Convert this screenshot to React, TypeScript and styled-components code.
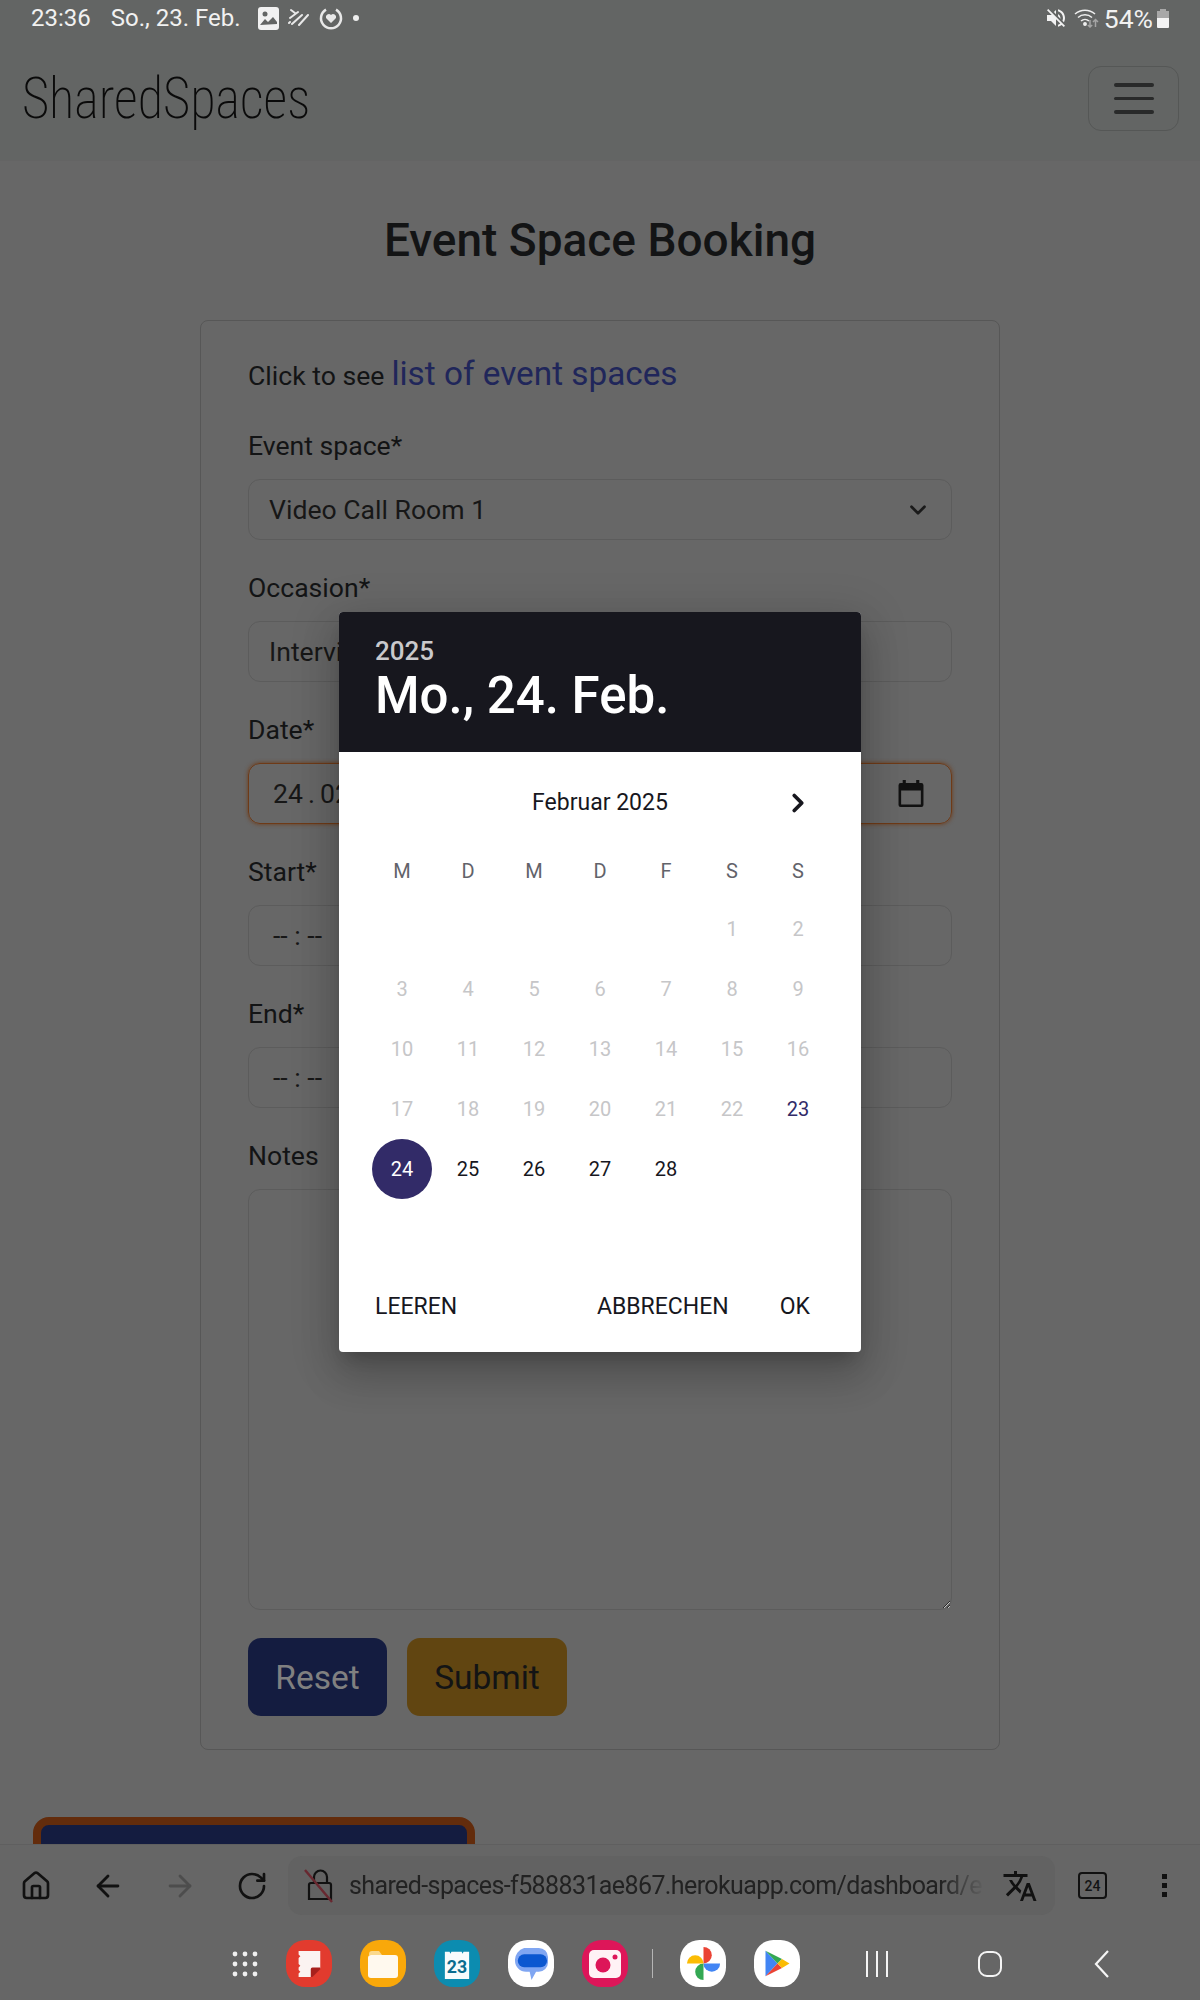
import styled, { createGlobalStyle } from "styled-components";
import { ArrowLeft, ArrowRight, ChevronDown, ChevronRight, House, RotateCw } from "lucide-react";
import { MdTranslate, MdVolumeOff } from "react-icons/md";

const GlobalStyle = createGlobalStyle`
  html, body {
    margin: 0;
    padding: 0;
    background: #676767;
  }
  * {
    box-sizing: border-box;
  }
`;

const Screen = styled.div`
  position: relative;
  width: 1200px;
  height: 2000px;
  overflow: hidden;
  display: flex;
  flex-direction: column;
  font-family: Roboto, "Liberation Sans", sans-serif;
  background: #676767;
  color: #131415;
`;

const StatusBar = styled.div`
  height: 36px;
  flex: none;
  display: flex;
  align-items: center;
  padding: 0 31px;
  background: #636564;
  color: #f1f1f1;
  font-size: 24px;
`;

const StatusDate = styled.span`
  margin-left: 20px;
  margin-right: 17px;
`;

const StatusIcons = styled.div`
  display: flex;
  align-items: center;
  gap: 9px;
`;

const StatusRight = styled.div`
  margin-left: auto;
  display: flex;
  align-items: center;
`;

const Battery = styled.span`
  font-size: 26.5px;
  margin: 0 4px 0 4px;
`;

const Navbar = styled.nav`
  height: 125px;
  flex: none;
  display: flex;
  align-items: center;
  justify-content: space-between;
  padding: 1px 21px 0 22px;
  background: #636564;
  border-bottom: 1px solid #646464;
`;

const Brand = styled.div`
  font-size: 58px;
  font-weight: 200;
  color: #0a0a0a;
  transform: scaleX(0.9);
  transform-origin: left center;
  font-stretch: 75%;
  line-height: 1;
  margin-top: -2px;
`;

const Toggler = styled.div`
  width: 91px;
  height: 65px;
  border: 1px solid #555756;
  border-radius: 13px;
  display: flex;
  flex-direction: column;
  justify-content: center;
  align-items: center;
  gap: 10px;
`;

const TogglerBar = styled.span`
  width: 40px;
  height: 3.5px;
  border-radius: 2px;
  background: #292a2a;
`;

const Content = styled.main`
  flex: 1;
  min-height: 0;
  overflow: hidden;
  display: flex;
  flex-direction: column;
`;

const Heading = styled.h1`
  margin: 52px 0 53px;
  text-align: center;
  font-size: 46px;
  font-weight: 500;
  line-height: 54px;
`;

const Card = styled.section`
  width: 800px;
  height: 1430px;
  flex: none;
  margin: 0 auto;
  padding: 33px 47px;
  border: 1px solid #575757;
  border-radius: 8px;
`;

const ListRow = styled.p`
  margin: 0 0 29px;
  height: 44px;
  font-size: 26.6px;
  display: flex;
  align-items: baseline;
  gap: 7px;
`;

const ListLink = styled.a`
  font-size: 33.3px;
  color: #20265a;
`;

const Label = styled.div`
  font-size: 26.6px;
  line-height: 38px;
  margin-bottom: 14px;
`;

const inputBox = `
  width: 100%;
  height: 61px;
  border-radius: 12px;
  border: 1px solid #5c5c5c;
  background: transparent;
  font-family: Roboto, "Liberation Sans", sans-serif;
  font-size: 26.6px;
  color: #171717;
  display: flex;
  align-items: center;
  justify-content: space-between;
  outline: none;
  margin-bottom: 29px;
`;

const Select = styled.div`
  ${inputBox}
  padding: 0 20px;
`;

const TextInput = styled.input`
  ${inputBox}
  padding: 0 20px;
`;

const TimeInput = styled.div<{ $focused?: boolean }>`
  ${inputBox}
  padding: 0 24px;
  ${(p) => p.$focused && "border-color: #6e3a17; box-shadow: 0 0 4px #6e3a17; word-spacing: -1.5px;"}
`;

const Notes = styled.textarea`
  display: block;
  width: 100%;
  height: 421px;
  border-radius: 12px;
  border: 1px solid #5c5c5c;
  background: transparent;
  resize: vertical;
  outline: none;
`;

const Buttons = styled.div`
  display: flex;
  gap: 20px;
  margin-top: 28px;
`;

const ActionButton = styled.div<{ $bg: string; $fg: string; $w: number }>`
  width: ${(p) => p.$w}px;
  height: 78px;
  border-radius: 13px;
  background: ${(p) => p.$bg};
  color: ${(p) => p.$fg};
  font-size: 33.5px;
  display: flex;
  align-items: center;
  justify-content: center;
`;

const ChatButton = styled.div`
  width: 442px;
  height: 120px;
  flex: none;
  margin: 67px 0 0 33px;
  border: 8px solid #632c0c;
  border-radius: 16px;
  background: #141c40;
`;

const BrowserBar = styled.div`
  height: 83px;
  flex: none;
  display: flex;
  align-items: flex-start;
  padding-top: 11px;
  border-top: 1px solid #5f5f5f;
  background: #666;
`;

const NavSlot = styled.div<{ $dim?: boolean }>`
  width: 72px;
  height: 59px;
  display: flex;
  align-items: center;
  justify-content: center;
  color: ${(p) => (p.$dim ? "#4d4d4d" : "#111")};
`;

const UrlPill = styled.div`
  width: 767px;
  height: 59px;
  border-radius: 14px;
  background: #626262;
  display: flex;
  align-items: center;
  padding: 0 17px 0 16px;
`;

const UrlText = styled.div`
  flex: 1;
  margin: 0 17px 0 15px;
  font-size: 25px;
  letter-spacing: -0.6px;
  color: #222;
  white-space: nowrap;
  overflow: hidden;
  -webkit-mask-image: linear-gradient(to right, #000 93%, transparent 100%);
  mask-image: linear-gradient(to right, #000 93%, transparent 100%);
`;

const TabCount = styled.div`
  width: 29px;
  height: 27px;
  margin: 16px 0 0 23px;
  border: 2px solid #111;
  border-radius: 4px;
  font-size: 14px;
  font-weight: 500;
  display: flex;
  align-items: center;
  justify-content: center;
`;

const MenuDots = styled.div`
  margin: 18px 0 0 55px;
  display: flex;
  flex-direction: column;
  gap: 4px;
`;

const MenuDot = styled.span`
  width: 5px;
  height: 5px;
  background: #111;
`;

const Dock = styled.div`
  height: 73px;
  flex: none;
  background: #666;
  display: flex;
  align-items: center;
  padding: 0 0 0 232px;
`;

const AppGroup = styled.div<{ $first?: boolean }>`
  display: flex;
  align-items: center;
  gap: 28px;
  margin-left: ${(p) => (p.$first ? "28px" : "0")};
`;

const AppIcon = styled.div<{ $bg: string }>`
  width: 46px;
  height: 47px;
  border-radius: 42%;
  background: ${(p) => p.$bg};
  display: flex;
  align-items: center;
  justify-content: center;
  overflow: hidden;
`;

const DockDivider = styled.span`
  width: 1px;
  height: 29px;
  margin: 0 27px 0 24px;
  background: #b5b5b5;
`;

const SoftKeys = styled.div`
  margin-left: 65px;
  display: flex;
  align-items: center;
  gap: 89px;
  color: #f5f5f5;
`;

const Dialog = styled.div`
  position: absolute;
  left: 339px;
  top: 612px;
  width: 522px;
  height: 740px;
  background: #fff;
  border-radius: 4px;
  overflow: hidden;
  box-shadow: 0 11px 15px -7px rgba(0, 0, 0, 0.2), 0 24px 38px 3px rgba(0, 0, 0, 0.14), 0 9px 46px 8px rgba(0, 0, 0, 0.12);
  display: flex;
  flex-direction: column;
`;

const DialogHead = styled.header`
  height: 140px;
  flex: none;
  background: #17171e;
  padding: 24px 36px 0;
  color: #fff;
`;

const DialogYear = styled.div`
  font-size: 26px;
  font-weight: 500;
  line-height: 30px;
  color: #c9c9cc;
`;

const DialogDate = styled.div`
  margin-top: 2px;
  font-size: 51px;
  font-weight: 500;
  line-height: 56px;
`;

const MonthRow = styled.div`
  height: 60px;
  margin: 20px 30px 0;
  display: flex;
  align-items: center;
  justify-content: center;
  position: relative;
  color: #17171e;
  font-size: 23px;
  font-weight: 450;
`;

const NextMonth = styled.span`
  position: absolute;
  right: 18px;
  top: 16px;
  display: flex;
`;

const WeekRow = styled.div`
  display: grid;
  grid-template-columns: repeat(7, 66px);
  margin: 11px 30px 0;
  height: 56px;
  align-items: center;
`;

const WeekDay = styled.span`
  text-align: center;
  font-size: 20px;
  color: #62636a;
`;

const DayGrid = styled.div`
  display: grid;
  grid-template-columns: repeat(7, 66px);
  grid-auto-rows: 60px;
  margin: 0 30px;
  height: 300px;
`;

const Day = styled.span<{ $kind: "off" | "on" | "today" | "selected" }>`
  width: 60px;
  height: 60px;
  justify-self: center;
  border-radius: 50%;
  display: flex;
  align-items: center;
  justify-content: center;
  font-size: 20px;
  color: ${(p) =>
    p.$kind === "off" ? "#c6c6c8" : p.$kind === "today" ? "#322b68" : p.$kind === "selected" ? "#fff" : "#17171e"};
  background: ${(p) => (p.$kind === "selected" ? "#322b68" : "transparent")};
`;

const DialogActions = styled.footer`
  margin-top: auto;
  height: 94px;
  padding: 2px 51px 0 36px;
  display: flex;
  align-items: center;
  font-size: 23px;
  font-weight: 450;
  color: #17171e;
`;

const ActionText = styled.span<{ $push?: boolean }>`
  margin-left: ${(p) => (p.$push ? "auto" : "0")};
  margin-right: ${(p) => (p.$push ? "51px" : "0")};
`;

function CalendarGlyph() {
  return (
    <svg width="26" height="27" viewBox="2 1 24 26" style={{ marginRight: 3 }}>
      <path d="M6 1h3v3h10V1h3v3h2a2 2 0 0 1 2 2v19a2 2 0 0 1-2 2H4a2 2 0 0 1-2-2V6a2 2 0 0 1 2-2h2zM4.500 11v13.500h19V11z" fill="#111" fillRule="evenodd" />
    </svg>
  );
}

function PictureGlyph() {
  return (
    <svg width="21" height="23" viewBox="0 0 21 23">
      <rect width="21" height="23" rx="3" fill="#f1f1f1" />
      <circle cx="7" cy="7" r="2.500" fill="#636564" />
      <path d="M2 18l5-6 3 3 5-5 4 5v2z" fill="#636564" />
    </svg>
  );
}

function StripesGlyph() {
  return (
    <svg width="22" height="20" viewBox="0 0 22 20" stroke="#e8e8e8" strokeWidth="2" strokeLinecap="round">
      <path d="M3 2l4 3M2 10l8-6M4 16l10-9M11 17l9-10M1 15l1-1" />
    </svg>
  );
}

function HeartRing() {
  return (
    <svg width="24" height="24" viewBox="0 0 24 24">
      <path d="M7 3.600a10 10 0 1 0 10 0" fill="none" stroke="#e8e8e8" strokeWidth="2.500" />
      <path d="M12 17l-5-5a3 3 0 0 1 5-3 3 3 0 0 1 5 3z" fill="#e8e8e8" />
    </svg>
  );
}

function WifiGlyph() {
  return (
    <svg width="26" height="20" viewBox="0 0 26 20" fill="none" stroke="#efefef" strokeWidth="1.500" style={{ marginLeft: 6 }}>
      <path d="M1 6a15 15 0 0 1 20 0M4 9.500a10.500 10.500 0 0 1 14 0M7 13a6 6 0 0 1 8 0" />
      <circle cx="11" cy="16" r="1.200" fill="#efefef" />
      <path d="M16 12v7M21.500 19v-7M19 14l2.500-2.500L24 14M13.800 17l2.200 2 2.200-2" stroke="#a5a5a5" />
    </svg>
  );
}

function BatteryGlyph() {
  return (
    <svg width="12" height="19" viewBox="0 0 12 19">
      <path d="M3 0h6v2h3v9H0V2h3z" fill="#a8a8a8" />
      <path d="M0 9h12v9a1 1 0 0 1-1 1H1a1 1 0 0 1-1-1z" fill="#f4f4f4" />
    </svg>
  );
}

function LockOff() {
  return (
    <svg width="30" height="34" viewBox="0 0 30 34" fill="none">
      <path d="M7 14h18a2 2 0 0 1 2 2v14H5V16a2 2 0 0 1 2-2zM10 14V8a6.500 6.500 0 0 1 13 0v6" stroke="#111" strokeWidth="2.200" />
      <path d="M1 1l27 32" stroke="#682830" strokeWidth="2.500" />
    </svg>
  );
}

function AppDots() {
  const dots = [0, 1, 2].flatMap((y) => [0, 1, 2].map((x) => [x, y]));
  return (
    <svg width="26" height="26" viewBox="0 0 26 26">
      {dots.map(([x, y]) => (
        <circle key={`${x}-${y}`} cx={3 + x * 10} cy={3 + y * 10} r="2.400" fill="#f0f0f0" />
      ))}
    </svg>
  );
}

function NotesApp() {
  return (
    <svg width="26" height="28" viewBox="0 0 30 32">
      <path d="M3 1h25v20l-10 10H3v-4l2-2-2-2v-3l2-2-2-2V9l2-2-2-2z" fill="#fbf3f1" />
      <path d="M28 20v2l-9 9h-2v-9a2 2 0 0 1 2-2z" fill="#a8201c" />
    </svg>
  );
}

function FilesApp() {
  return (
    <svg width="30" height="28" viewBox="0 0 30 28">
      <path d="M1 4a3 3 0 0 1 3-3h7l3 4H1z" fill="#fbd98c" />
      <rect x="0" y="5" width="30" height="23" rx="3" fill="#fff9ee" />
    </svg>
  );
}

function CalendarApp() {
  return (
    <svg width="28" height="30" viewBox="0 0 30 32">
      <path d="M2 3h5l1 2 1-2h11l1 2 1-2h6v29H2z" fill="#f7fbfc" />
      <text x="15" y="26" textAnchor="middle" fontSize="19" fontWeight="700" fontFamily="Roboto, sans-serif" fill="#0b6c8f">23</text>
    </svg>
  );
}

function MessagesApp() {
  return (
    <svg width="33" height="35" viewBox="0 0 36 38">
      <path d="M10 2h16a10 10 0 0 1 10 10v6a10 10 0 0 1-10 10h-3l-5 9-2-9h-4A12 12 0 0 1 0 16 14 14 0 0 1 10 2z" fill="#80a6f2" />
      <rect x="3" y="9" width="32" height="14" rx="7" fill="#0b57d0" />
    </svg>
  );
}

function CameraApp() {
  return (
    <svg width="32" height="28" viewBox="0 0 32 28">
      <rect width="32" height="28" rx="5" fill="#fff2f5" />
      <circle cx="14" cy="15" r="7.500" fill="#dd1659" />
      <circle cx="26" cy="7" r="2.500" fill="#dd1659" />
    </svg>
  );
}

function PhotosApp() {
  return (
    <svg width="35" height="35" viewBox="0 0 36 38">
      <path d="M18 19V1a9 9 0 0 1 0 18z" fill="#ea4335" />
      <path d="M18 19h18a9 9 0 0 1-18 0z" fill="#4285f4" />
      <path d="M18 19v18a9 9 0 0 1 0-18z" fill="#34a853" />
      <path d="M18 19H0a9 9 0 0 1 18 0z" fill="#fbbc04" />
    </svg>
  );
}

function PlayApp() {
  return (
    <svg width="27" height="29" viewBox="0 0 36 38">
      <path d="M2 2v34l16-17z" fill="#4285f4" />
      <path d="M2 2l16 17 6-6z" fill="#34a853" />
      <path d="M2 36l16-17 6 6z" fill="#ea4335" />
      <path d="M24 13l10 6-10 6-6-6z" fill="#fbbc04" />
    </svg>
  );
}

const weekDays = ["M", "D", "M", "D", "F", "S", "S"];

function dayKind(day: number) {
  if (day === 23) return "today";
  if (day === 24) return "selected";
  return day < 23 ? "off" : "on";
}

export default function App() {
  const days = Array.from({ length: 28 }, (_, i) => i + 1);

  return (
    <Screen>
      <GlobalStyle />
      <StatusBar>
        <span>23:36</span>
        <StatusDate>So., 23. Feb.</StatusDate>
        <StatusIcons>
          <PictureGlyph />
          <StripesGlyph />
          <HeartRing />
          <svg width="8" height="8" viewBox="0 0 8 8"><circle cx="4" cy="4" r="3" fill="#eee" /></svg>
        </StatusIcons>
        <StatusRight>
          <MdVolumeOff size={24} color="#f2f2f2" />
          <WifiGlyph />
          <Battery>54%</Battery>
          <BatteryGlyph />
        </StatusRight>
      </StatusBar>
      <Navbar>
        <Brand>SharedSpaces</Brand>
        <Toggler>
          <TogglerBar />
          <TogglerBar />
          <TogglerBar />
        </Toggler>
      </Navbar>
      <Content>
        <Heading>Event Space Booking</Heading>
        <Card>
          <ListRow>
            Click to see <ListLink>list of event spaces</ListLink>
          </ListRow>
          <Label>Event space*</Label>
          <Select>
            Video Call Room 1
            <ChevronDown size={26} strokeWidth={2.5} color="#1a1a1a" />
          </Select>
          <Label>Occasion*</Label>
          <TextInput readOnly value="Interview" />
          <Label>Date*</Label>
          <TimeInput $focused>
            24 . 02 . 2025
            <CalendarGlyph />
          </TimeInput>
          <Label>Start*</Label>
          <TimeInput>-- : --</TimeInput>
          <Label>End*</Label>
          <TimeInput>-- : --</TimeInput>
          <Label>Notes</Label>
          <Notes readOnly />
          <Buttons>
            <ActionButton $bg="#141c40" $fg="#808080" $w={139}>Reset</ActionButton>
            <ActionButton $bg="#614511" $fg="#131415" $w={160}>Submit</ActionButton>
          </Buttons>
        </Card>
        <ChatButton />
      </Content>
      <BrowserBar>
        <NavSlot><House size={32} strokeWidth={2} /></NavSlot>
        <NavSlot><ArrowLeft size={34} strokeWidth={2} /></NavSlot>
        <NavSlot $dim><ArrowRight size={34} strokeWidth={2} /></NavSlot>
        <NavSlot><RotateCw size={32} strokeWidth={2} /></NavSlot>
        <UrlPill>
          <LockOff />
          <UrlText>shared-spaces-f588831ae867.herokuapp.com/dashboard/e</UrlText>
          <MdTranslate size={36} color="#111" />
        </UrlPill>
        <TabCount>24</TabCount>
        <MenuDots>
          <MenuDot />
          <MenuDot />
          <MenuDot />
        </MenuDots>
      </BrowserBar>
      <Dock>
        <AppDots />
        <AppGroup $first>
          <AppIcon $bg="#e23b2e"><NotesApp /></AppIcon>
          <AppIcon $bg="#f9a80a"><FilesApp /></AppIcon>
          <AppIcon $bg="#0c8cb0"><CalendarApp /></AppIcon>
          <AppIcon $bg="#fff"><MessagesApp /></AppIcon>
          <AppIcon $bg="#dd1659"><CameraApp /></AppIcon>
        </AppGroup>
        <DockDivider />
        <AppGroup>
          <AppIcon $bg="#fff"><PhotosApp /></AppIcon>
          <AppIcon $bg="#fff"><PlayApp /></AppIcon>
        </AppGroup>
        <SoftKeys>
          <svg width="24" height="26" viewBox="0 0 24 26" stroke="currentColor" strokeWidth="2"><path d="M2 0v26M12 0v26M22 0v26" /></svg>
          <svg width="24" height="26" viewBox="0 0 24 26" fill="none" stroke="currentColor" strokeWidth="2"><rect x="1" y="1" width="22" height="24" rx="8" /></svg>
          <svg width="22" height="28" viewBox="-3 0 22 28" fill="none" stroke="currentColor" strokeWidth="2.200"><path d="M14 1L2 14l12 13" /></svg>
        </SoftKeys>
      </Dock>
      <Dialog>
        <DialogHead>
          <DialogYear>2025</DialogYear>
          <DialogDate>Mo., 24. Feb.</DialogDate>
        </DialogHead>
        <MonthRow>
          Februar 2025
          <NextMonth><ChevronRight size={30} strokeWidth={3} /></NextMonth>
        </MonthRow>
        <WeekRow>
          {weekDays.map((d, i) => (
            <WeekDay key={i}>{d}</WeekDay>
          ))}
        </WeekRow>
        <DayGrid>
          {Array.from({ length: 5 }, (_, i) => (
            <span key={i} />
          ))}
          {days.map((d) => (
            <Day key={d} $kind={dayKind(d)}>{d}</Day>
          ))}
        </DayGrid>
        <DialogActions>
          <ActionText>LEEREN</ActionText>
          <ActionText $push>ABBRECHEN</ActionText>
          <ActionText>OK</ActionText>
        </DialogActions>
      </Dialog>
    </Screen>
  );
}
